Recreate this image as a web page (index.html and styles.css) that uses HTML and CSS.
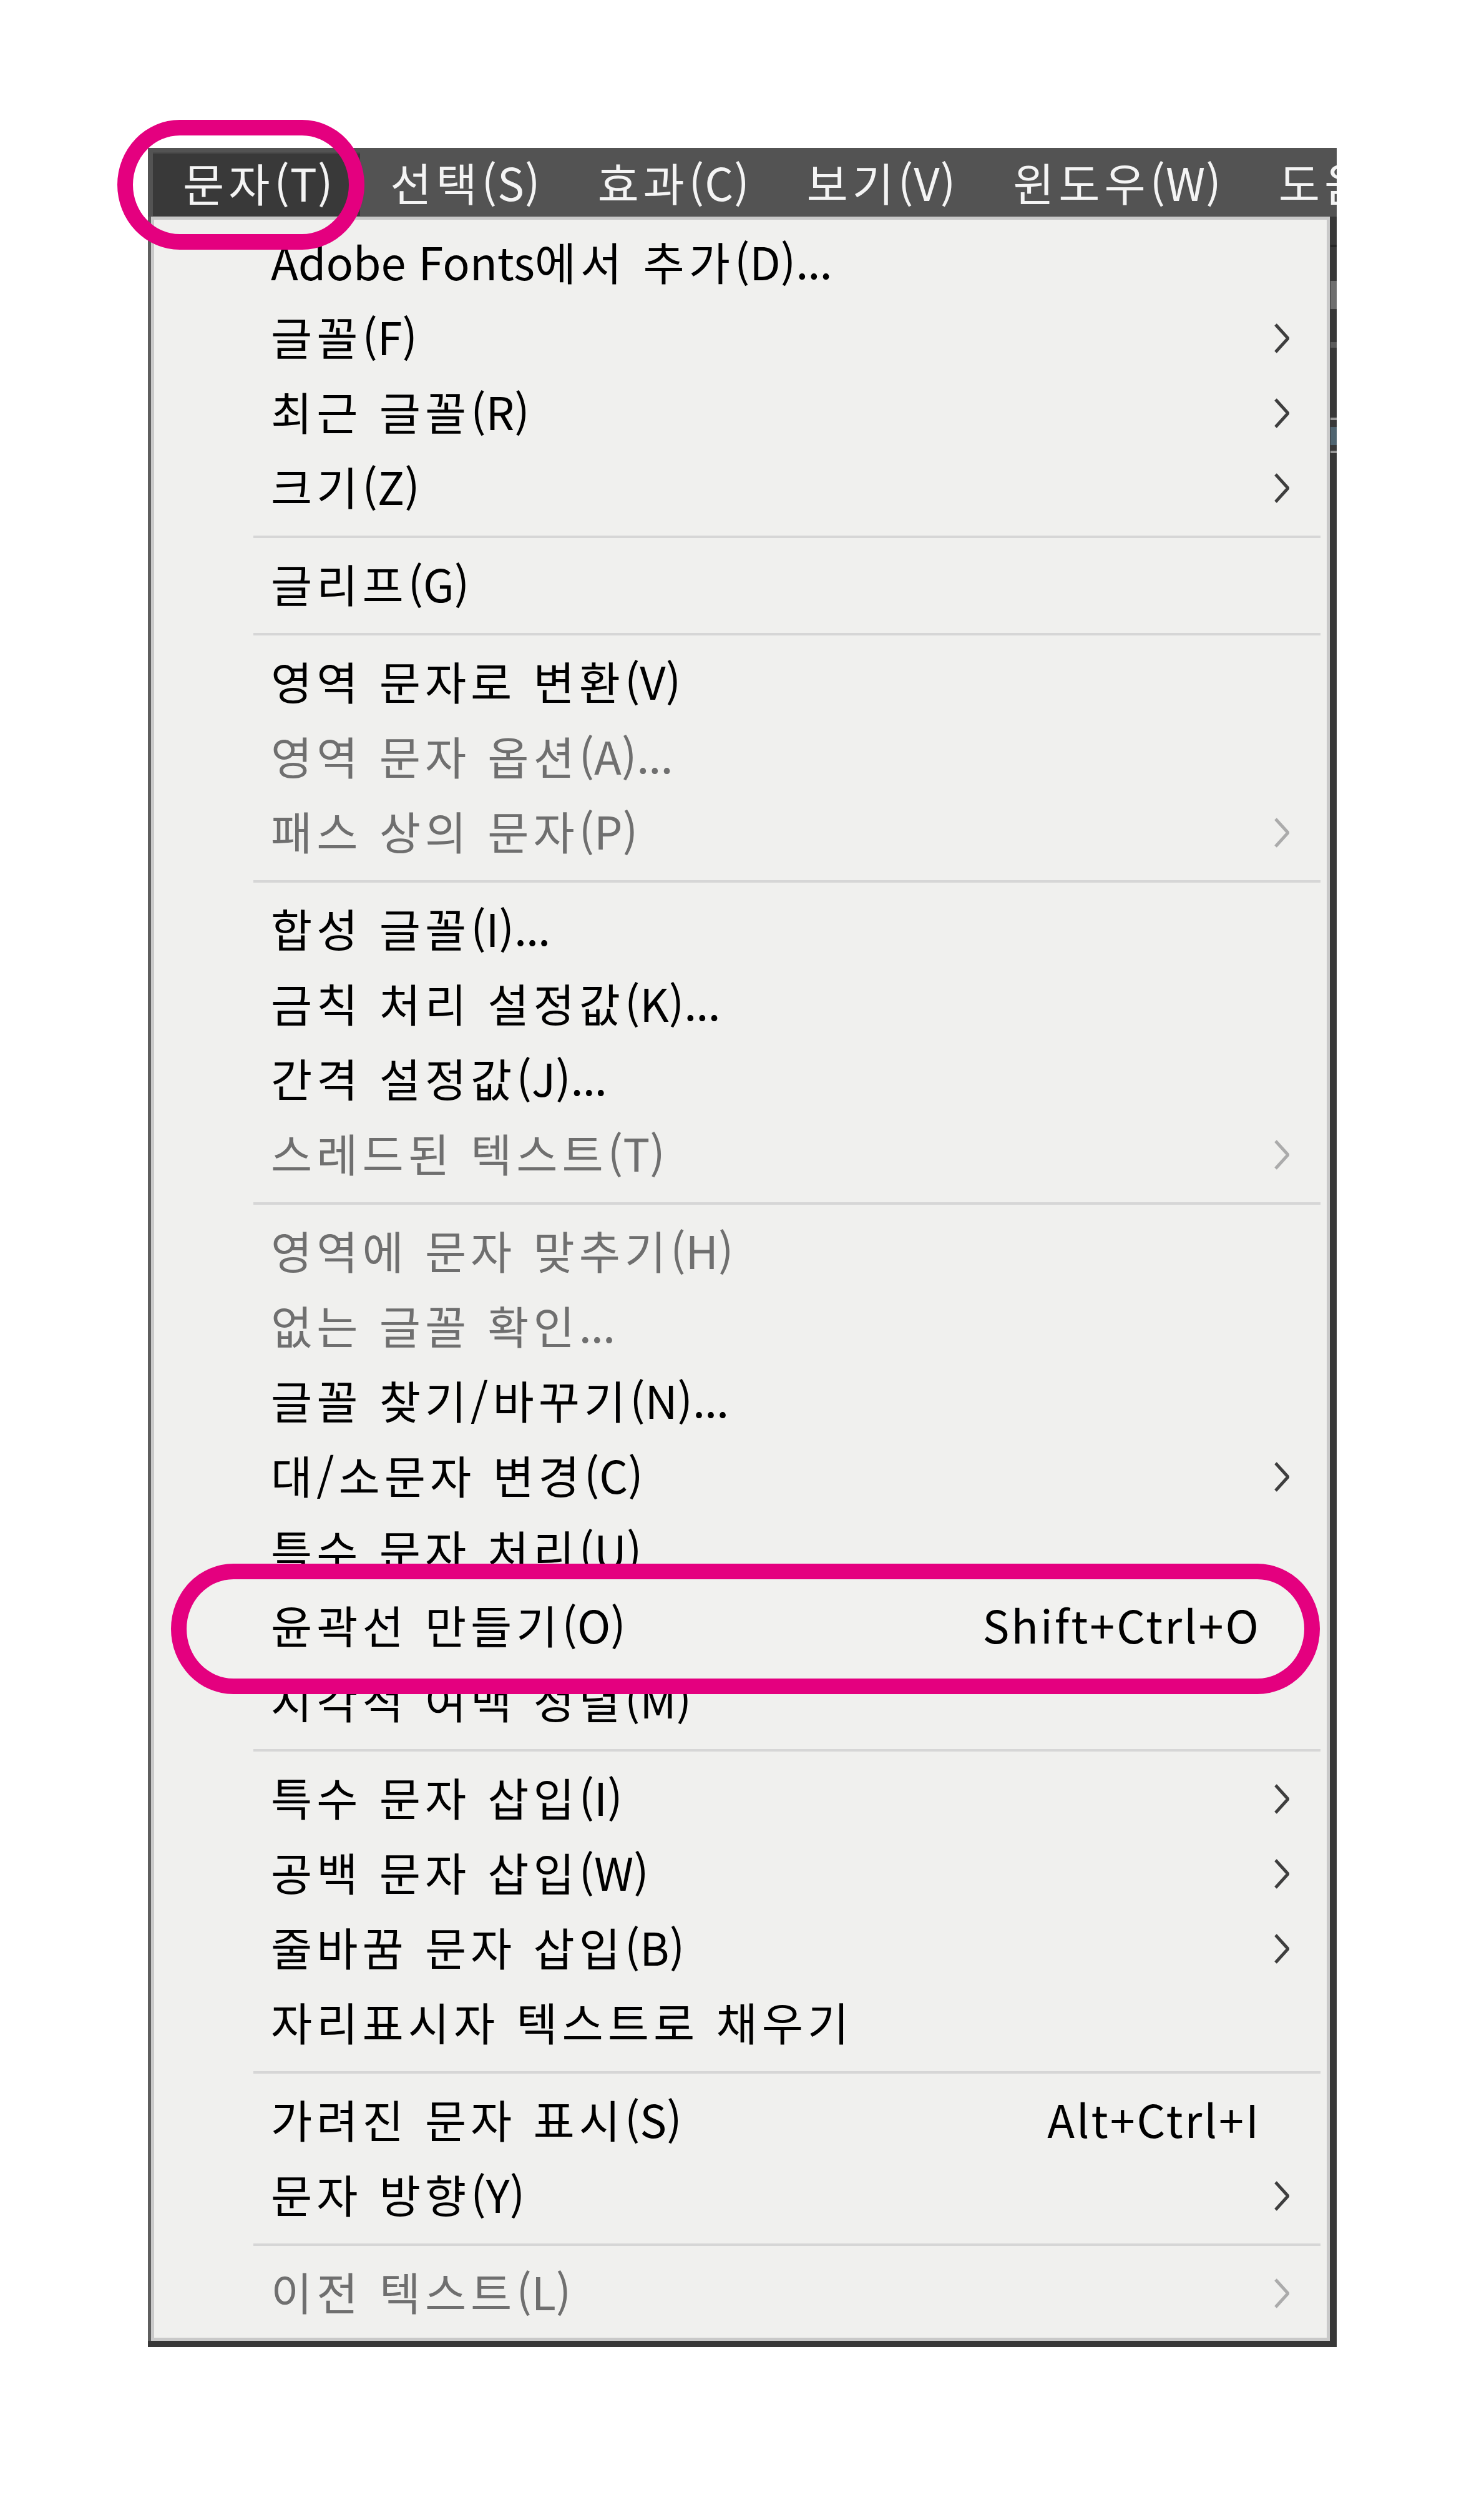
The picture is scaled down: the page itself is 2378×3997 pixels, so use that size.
FILE: index.html
```html
<!DOCTYPE html>
<html lang="ko">
<head>
<meta charset="utf-8">
<title>문자 메뉴</title>
<link rel="stylesheet" href="styles.css">
</head>
<body>
<div class="stage">
  <div class="app">
    <div class="menubar">
      <div class="mb-item active">문자<span class="en">(T)</span></div>
      <div class="mb-item">선택<span class="en">(S)</span></div>
      <div class="mb-item">효과<span class="en">(C)</span></div>
      <div class="mb-item">보기<span class="en">(V)</span></div>
      <div class="mb-item">윈도우<span class="en">(W)</span></div>
      <div class="mb-item">도움말<span class="en">(H)</span></div>
    </div>
    <div class="panel">
      <div class="row"><span class="lbl"><span class="en">Adobe Fonts</span>에서 추가<span class="en">(D)</span><span class="ell">...</span></span></div>
      <div class="row sub"><span class="lbl">글꼴<span class="en">(F)</span></span><span class="arrow"><svg viewBox="0 0 24 48"><polyline points="2,2 22,24 2,46"/></svg></span></div>
      <div class="row sub"><span class="lbl">최근 글꼴<span class="en">(R)</span></span><span class="arrow"><svg viewBox="0 0 24 48"><polyline points="2,2 22,24 2,46"/></svg></span></div>
      <div class="row sub"><span class="lbl">크기<span class="en">(Z)</span></span><span class="arrow"><svg viewBox="0 0 24 48"><polyline points="2,2 22,24 2,46"/></svg></span></div>
      <div class="sep"></div>
      <div class="row"><span class="lbl">글리프<span class="en">(G)</span></span></div>
      <div class="sep"></div>
      <div class="row"><span class="lbl">영역 문자로 변환<span class="en">(V)</span></span></div>
      <div class="row dis"><span class="lbl">영역 문자 옵션<span class="en">(A)</span><span class="ell">...</span></span></div>
      <div class="row dis sub"><span class="lbl">패스 상의 문자<span class="en">(P)</span></span><span class="arrow"><svg viewBox="0 0 24 48"><polyline points="2,2 22,24 2,46"/></svg></span></div>
      <div class="sep"></div>
      <div class="row"><span class="lbl">합성 글꼴<span class="en">(I)</span><span class="ell">...</span></span></div>
      <div class="row"><span class="lbl">금칙 처리 설정값<span class="en">(K)</span><span class="ell">...</span></span></div>
      <div class="row"><span class="lbl">간격 설정값<span class="en">(J)</span><span class="ell">...</span></span></div>
      <div class="row dis sub"><span class="lbl">스레드된 텍스트<span class="en">(T)</span></span><span class="arrow"><svg viewBox="0 0 24 48"><polyline points="2,2 22,24 2,46"/></svg></span></div>
      <div class="sep"></div>
      <div class="row dis"><span class="lbl">영역에 문자 맞추기<span class="en">(H)</span></span></div>
      <div class="row dis"><span class="lbl">없는 글꼴 확인<span class="ell">...</span></span></div>
      <div class="row"><span class="lbl">글꼴 찾기/바꾸기<span class="en">(N)</span><span class="ell">...</span></span></div>
      <div class="row sub"><span class="lbl">대/소문자 변경<span class="en">(C)</span></span><span class="arrow"><svg viewBox="0 0 24 48"><polyline points="2,2 22,24 2,46"/></svg></span></div>
      <div class="row"><span class="lbl">특수 문자 처리<span class="en">(U)</span></span></div>
      <div class="row hl"><span class="lbl">윤곽선 만들기<span class="en">(O)</span></span><span class="key">Shift+Ctrl+O</span></div>
      <div class="row"><span class="lbl">시각적 여백 정렬<span class="en">(M)</span></span></div>
      <div class="sep"></div>
      <div class="row sub"><span class="lbl">특수 문자 삽입<span class="en">(I)</span></span><span class="arrow"><svg viewBox="0 0 24 48"><polyline points="2,2 22,24 2,46"/></svg></span></div>
      <div class="row sub"><span class="lbl">공백 문자 삽입<span class="en">(W)</span></span><span class="arrow"><svg viewBox="0 0 24 48"><polyline points="2,2 22,24 2,46"/></svg></span></div>
      <div class="row sub"><span class="lbl">줄바꿈 문자 삽입<span class="en">(B)</span></span><span class="arrow"><svg viewBox="0 0 24 48"><polyline points="2,2 22,24 2,46"/></svg></span></div>
      <div class="row"><span class="lbl">자리표시자 텍스트로 채우기</span></div>
      <div class="sep"></div>
      <div class="row"><span class="lbl">가려진 문자 표시<span class="en">(S)</span></span><span class="key">Alt+Ctrl+I</span></div>
      <div class="row sub"><span class="lbl">문자 방향<span class="en">(Y)</span></span><span class="arrow"><svg viewBox="0 0 24 48"><polyline points="2,2 22,24 2,46"/></svg></span></div>
      <div class="sep"></div>
      <div class="row dis sub"><span class="lbl">이전 텍스트<span class="en">(L)</span></span><span class="arrow"><svg viewBox="0 0 24 48"><polyline points="2,2 22,24 2,46"/></svg></span></div>
    </div>
  </div>
  <div class="ring ring-menu"></div>
  <div class="ring ring-item"></div>
</div>
</body>
</html>
```

FILE: styles.css
```css
html, body {
  margin: 0;
  padding: 0;
  background: #ffffff;
}
body {
  font-family: "Noto Sans CJK KR", "Noto Sans", sans-serif;
  font-size: 72px;
  letter-spacing: 7px;
  word-spacing: 0;
  width: 2378px;
  height: 3997px;
  overflow: hidden;
  position: relative;
}
.en {
  letter-spacing: 0;
  word-spacing: 0;
}
.ell {
  letter-spacing: -1px;
}
.stage {
  position: relative;
  padding: 237px 0 0 237px;
}
.app {
  width: 1905px;
  padding-bottom: 10px;
  background:
    linear-gradient(#6e6e6e, #6e6e6e) right 0 top 213px / 10px 45px no-repeat,
    linear-gradient(#5c5c5c, #5c5c5c) right 0 top 311px / 10px 9px no-repeat,
    linear-gradient(#9a9a9a, #9a9a9a) right 0 top 432px / 10px 4px no-repeat,
    linear-gradient(#4f6470, #4f6470) right 0 top 447px / 10px 29px no-repeat,
    linear-gradient(#9a9a9a, #9a9a9a) right 0 top 485px / 10px 4px no-repeat,
    linear-gradient(#262626, #262626) right 0 top 155px / 10px 4px no-repeat,
    #383838;
}
.menubar {
  height: 110px;
  background: #535353;
  display: flex;
  align-items: flex-start;
  padding: 7px 0 0 8px;
  box-sizing: border-box;
  overflow: hidden;
  white-space: nowrap;
}
.mb-item {
  height: 102px;
  box-sizing: border-box;
  display: flex;
  align-items: center;
  padding: 0 43px 8px 48px;
  color: #f4f4f4;
  line-height: 1;
  flex: none;
}
.mb-item .en {
  letter-spacing: 1px;
}
.mb-item.active {
  background: #393939;
  border-top: 2px solid #4a4a4a;
}
.panel {
  margin-left: 5px;
  width: 1889px;
  box-sizing: border-box;
  background: #f0f0ee;
  border: 5px solid #c9c9c9;
  box-shadow: -5px 0 0 #5f5f5f;
  padding: 10px 0 11px 0;
}
.row {
  height: 120px;
  box-sizing: border-box;
  display: flex;
  align-items: center;
  padding: 0 60px 8px 187px;
  color: #000;
  line-height: 1;
  white-space: nowrap;
}
.row .lbl {
  flex: 1;
}
.row .key {
  margin-right: 46px;
  letter-spacing: 3px;
}
.arrow {
  width: 24px;
  height: 48px;
  margin: 8px 0 0 22px;
  display: block;
}
.arrow svg {
  display: block;
  width: 24px;
  height: 48px;
  fill: none;
  stroke: #3e3e3e;
  stroke-width: 5;
}
.row.dis {
  color: #6f6f6f;
}
.row.dis .arrow svg {
  stroke: #ababab;
}
.row.hl {
  position: relative;
  z-index: 3;
}
.sep {
  height: 4px;
  margin: 16px 10px 16px 159px;
  background: #d6d6d6;
}
.ring {
  position: absolute;
  box-sizing: border-box;
  border: 25px solid #e4007f;
}
.ring-menu {
  left: 188px;
  top: 192px;
  width: 396px;
  height: 208px;
  border-radius: 100px / 50%;
}
.ring-item {
  left: 274px;
  top: 2505px;
  width: 1841px;
  height: 209px;
  border-radius: 100px / 50%;
  background: #f1f1ef;
  z-index: 2;
}
```
